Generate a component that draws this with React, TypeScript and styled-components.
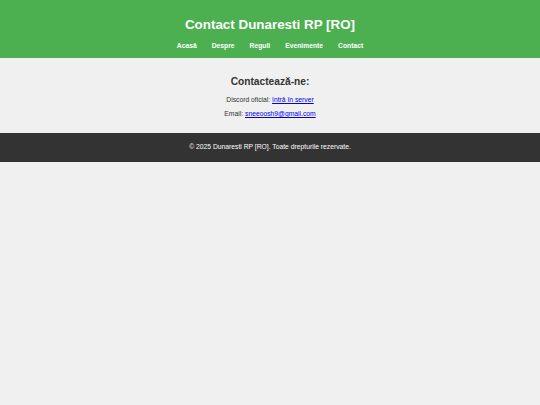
import styled, { createGlobalStyle } from "styled-components";

const GlobalStyle = createGlobalStyle`
  body {
    margin: 0;
    background-color: #f0f0f0;
    font-family: "Liberation Sans", Arial, sans-serif;
    color: #333;
  }
`;

const Header = styled.header`
  background-color: #4caf50;
  color: white;
  text-align: center;
  padding: 17px 0 8px;
`;
const Title = styled.h1`
  margin: 0;
  font-size: 13.4px;
  font-weight: 700;
`;
const Nav = styled.nav`
  display: flex;
  justify-content: center;
  gap: 15px;
  margin-top: 9px;
`;
const NavLink = styled.a`
  color: white;
  text-decoration: none;
  font-size: 6.75px;
  font-weight: 700;
  line-height: 9px;
`;
const Section = styled.section`
  text-align: center;
  padding: 18px 0 12px;
`;
const Heading = styled.h2`
  margin: 0 0 6px;
  font-size: 10.2px;
  font-weight: 700;
  color: #333;
`;
const Line = styled.p`
  margin: 0;
  font-size: 6.75px;
  line-height: 14px;
`;
const Link = styled.a`
  color: #0000ee;
`;
const Footer = styled.footer`
  background-color: #333;
  color: white;
  text-align: center;
  padding: 10px 0 11px;
  font-size: 6.75px;
  line-height: 8px;
`;

export default function App() {
  const links = ["Acasă", "Despre", "Reguli", "Evenimente", "Contact"];
  return (
    <>
      <GlobalStyle />
      <Header>
        <Title>Contact Dunaresti RP [RO]</Title>
        <Nav>
          {links.map((l) => (
            <NavLink key={l} href="#">
              {l}
            </NavLink>
          ))}
        </Nav>
      </Header>
      <Section>
        <Heading>Contactează-ne:</Heading>
        <Line>
          Discord oficial: <Link href="#">Intră în server</Link>
        </Line>
        <Line>
          Email: <Link href="#">sneeoosh9@gmail.com</Link>
        </Line>
      </Section>
      <Footer>© 2025 Dunaresti RP [RO]. Toate drepturile rezervate.</Footer>
    </>
  );
}
